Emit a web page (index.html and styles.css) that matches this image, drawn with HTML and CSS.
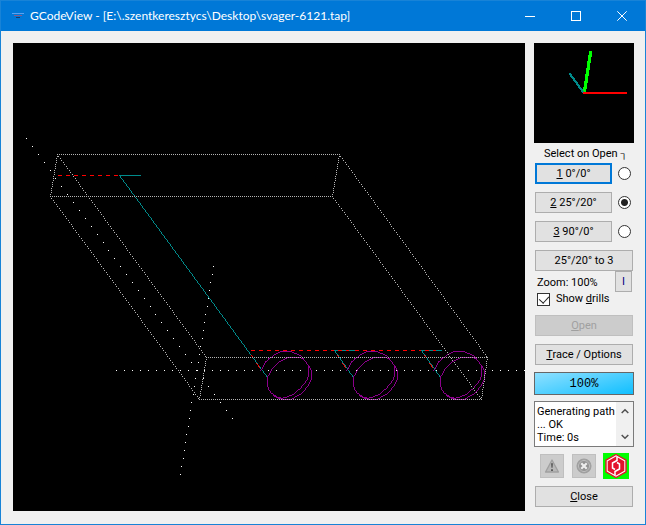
FILE: index.html
```html
<!DOCTYPE html>
<html lang="en">
<head>
<meta charset="utf-8">
<title>GCodeView</title>
<link rel="stylesheet" href="styles.css">
</head>
<body>
<div class="window">
  <header class="titlebar">
    <svg class="app-icon" viewBox="0 0 12 6" aria-hidden="true"><path d="M0 .5h12" stroke="#5aa2f2"/><path d="M2 2.5h8" stroke="#8a5a86"/><path d="M4 4.5h4" stroke="#1e3a66"/></svg>
    <h1 class="title">GCodeView - [E:\.szentkeresztycs\Desktop\svager-6121.tap]</h1>
    <div class="caption-buttons">
      <button class="caption" aria-label="Minimize"><svg viewBox="0 0 10 10"><path d="M0 5.5h10"/></svg></button>
      <button class="caption" aria-label="Maximize"><svg viewBox="0 0 10 10"><path d="M.5 .5h9v9h-9z"/></svg></button>
      <button class="caption" aria-label="Close window"><svg class="smooth" viewBox="0 0 10 10"><path d="M.3 .3l9.4 9.4M9.700 .3l-9.400 9.400"/></svg></button>
    </div>
  </header>
  <main class="content">
    <div class="viewport"><canvas id="view" width="512" height="468"></canvas></div>
    <aside class="sidebar">
      <canvas class="gizmo" id="gizmo" width="100" height="100"></canvas>
      <p class="caption-text">Select on Open <span class="corner">┐</span></p>
      <div class="presets">
        <div class="preset"><button class="btn focused"><u>1</u> 0°/0°</button><input type="radio" name="view" aria-label="Select view 1 on open"></div>
        <div class="preset"><button class="btn"><u>2</u> 25°/20°</button><input type="radio" name="view" aria-label="Select view 2 on open" checked></div>
        <div class="preset"><button class="btn"><u>3</u> 90°/0°</button><input type="radio" name="view" aria-label="Select view 3 on open"></div>
        <button class="btn">25°/20° to 3</button>
      </div>
      <div class="zoom-row">
        <div class="zoom-info">
          <span>Zoom: 100%</span>
          <label class="check"><input type="checkbox" checked><span>Show <u>d</u>rills</span></label>
        </div>
        <button class="btn info">I</button>
      </div>
      <div class="actions">
        <button class="btn" disabled><u>O</u>pen</button>
        <button class="btn"><u>T</u>race / Options</button>
      </div>
      <div class="progress" role="progressbar" aria-valuenow="100">100%</div>
      <div class="log">
        <textarea readonly aria-label="Log">Generating path
... OK
Time: 0s</textarea>
        <div class="scroll">
          <button aria-label="Scroll up"><svg viewBox="0 0 8 6"><path d="M.7 5L4 1.700 7.300 5"/></svg></button>
          <button aria-label="Scroll down"><svg viewBox="0 0 8 6"><path d="M.7 1L4 4.300 7.300 1"/></svg></button>
        </div>
      </div>
      <div class="tools">
        <button class="tool" aria-label="Warnings" disabled><svg viewBox="0 0 24 24"><path d="M12 5.500L19 18.500H5z" fill="#b8b8b8" stroke="#a0a0a0" stroke-width="1.500" stroke-linejoin="round"/><path d="M11 9h2l-.4 5h-1.200zM11 15.500h2v2h-2z" fill="#555"/></svg></button>
        <button class="tool" aria-label="Stop" disabled><svg viewBox="0 0 24 24"><circle cx="12" cy="12" r="7.500" fill="#939393" stroke="#a0a0a0" stroke-width="1.500"/><circle cx="12" cy="12" r="6" fill="none" stroke="#c4c4c4"/><path d="M9 9l6 6M15 9l-6 6" stroke="#eee" stroke-width="2.400"/></svg></button>
        <button class="tool brand" aria-label="About"><svg viewBox="0 0 26 26"><path d="M13 1.500L23 7.200V18.800L13 24.500 3 18.800V7.200z" fill="#fff" stroke="#e3122b" stroke-width="1.400"/><path d="M13 3.500L21.300 8.200V17.800L13 22.500 4.700 17.800V8.200z" fill="#e3122b"/><path d="M14 4V7.500L9.500 10V15L12 16.500M12 22V18.500L16.500 16V11L14 9.500" fill="none" stroke="#fff" stroke-width="1.500"/></svg></button>
      </div>
      <button class="btn close"><u>C</u>lose</button>
    </aside>
  </main>
</div>
<script src="view.js"></script>
</body>
</html>
```
FILE: styles.css
```css
* { box-sizing: border-box; }
body { margin: 0; background: #f0f0f0; color: #000; font: 11px/14px Roboto, "Liberation Sans", sans-serif; }
button, textarea { font: inherit; color: inherit; }
p, h1 { margin: 0; }
.window { min-height: 100vh; display: flex; flex-direction: column; border: 1px solid #1883d7; }
.titlebar { display: flex; align-items: center; height: 30px; background: #0078d7; color: #fff; }
.app-icon { width: 12px; height: 6px; margin: 0 6px 0 11px; }
.title { flex: 1; font: 12px/16px Lato, "Open Sans", sans-serif; white-space: nowrap; }
.caption-buttons { display: flex; }
.caption { width: 46px; height: 30px; padding: 0; border: 0; background: none; display: grid; place-items: center; }
.caption svg { width: 10px; height: 10px; fill: none; stroke: #fff; shape-rendering: crispEdges; }
.caption .smooth { shape-rendering: auto; }
.content { flex: 1; display: flex; gap: 9px; padding: 12px 11px 13px 12px; }
.viewport { flex: 1; min-width: 0; background: #000; }
canvas { display: block; max-width: 100%; }
.sidebar { width: 100px; display: flex; flex-direction: column; }
.gizmo { background: #000; }
.caption-text { padding: 4px 0 2px 10px; height: 20px; white-space: nowrap; }
.corner { font-size: 10px; }
.presets, .actions { display: flex; flex-direction: column; gap: 8px; padding: 0 1px; }
.preset { display: flex; justify-content: space-between; align-items: center; }
.preset .btn { width: 77px; }
.btn { height: 21px; padding: 0; border: 1px solid #adadad; background: #e1e1e1; text-align: center; }
.btn:disabled { background: #ccc; border-color: #bfbfbf; color: #a0a0a0; }
.btn.focused { border: 2px solid #0078d7; }
input { appearance: none; margin: 0; border: 1px solid #333; background: #fff; width: 13px; height: 13px; }
input[type="radio"] { border-radius: 50%; margin-right: 2px; }
input[type="radio"]:checked { background: radial-gradient(circle, #222 3px, #fff 4px); }
input[type="checkbox"] { position: relative; }
input[type="checkbox"]::after { content: ""; position: absolute; left: 3px; top: 0; width: 5px; height: 8px; border: solid #222; border-width: 0 1px 1px 0; transform: rotate(42deg); }
.zoom-row { display: flex; justify-content: space-between; padding: 0 2px 0 3px; height: 44px; }
.zoom-info { display: flex; flex-direction: column; gap: 2px; padding-top: 5px; white-space: nowrap; }
.check { display: flex; align-items: center; gap: 6px; }
.info { width: 17px; margin-left: -17px; color: #000080; }
.progress { margin-top: 7px; height: 23px; border: 1px solid #666; background: linear-gradient(165deg, #8fe0ff, #10bfff); font: 12px/22px "Liberation Mono", monospace; text-align: center; }
.log { display: flex; height: 46px; margin-top: 6px; border: 1px solid #7a7a7a; background: #fff; }
.log textarea { flex: 1; min-width: 0; padding: 3px 0 0 2px; border: 0; resize: none; overflow: hidden; line-height: 13px; white-space: pre; }
.scroll { width: 17px; background: #f0f0f0; display: flex; flex-direction: column; justify-content: space-between; }
.scroll button { height: 18px; padding: 0; border: 0; background: none; display: grid; place-items: center; }
.scroll svg { width: 8px; height: 6px; fill: none; stroke: #505050; stroke-width: 1.5px; }
.tools { display: flex; align-items: center; gap: 8px; margin: 6px 0 7px; padding-left: 6px; }
.tool { width: 24px; height: 24px; padding: 0; border: 1px solid #bfbfbf; background: #ccc; }
.tool svg { display: block; width: 22px; height: 22px; }
.brand { width: 26px; height: 26px; border: 0; background: #0f0; margin-left: -1px; }
.brand svg { width: 26px; height: 26px; }
.close { margin: 0 1px; }
```
FILE: view.js
```js
const LEFT = 13, TOP = 43;
const ctx = document.getElementById("view").getContext("2d");

function dot(c, x, y, color, size = 1) {
  c.fillStyle = color;
  c.fillRect(x, y, size, size);
}

// Steps along the major axis; draws `on` pixels out of every `period`.
function line(x0, y0, x1, y1, color, on = 1, period = 1) {
  const n = Math.max(Math.abs(x1 - x0), Math.abs(y1 - y0));
  for (let i = 0; i <= n; i++) {
    if (i % period >= on) continue;
    const t = n ? i / n : 0;
    dot(ctx, Math.round(x0 + (x1 - x0) * t) - LEFT, Math.round(y0 + (y1 - y0) * t) - TOP, color);
  }
}

const TEAL = "#008b8b", RED = "#ff0000", PURPLE = "#8b008b", GREY = "#b4b4b4";

// Helical drill path, as points on the first hole.
const hole = [
  [260, 370], [264, 363], [270, 357], [278, 352], [287, 351], [298, 354], [305, 361], [310, 369], [311, 376],
  [308, 384], [302, 392], [292, 398], [284, 399], [275, 396], [269, 390], [267, 385], [267, 378],
  [270, 371], [277, 363], [285, 358], [292, 357], [300, 357], [305, 361], [308, 368], [308, 375],
  [304, 383], [295, 392], [285, 397], [278, 397], [272, 393]
];
function spline(points, dx) {
  let prev = null;
  for (let i = 0; i < points.length - 1; i++) {
    const a = points[Math.max(i - 1, 0)], b = points[i], c = points[i + 1], d = points[Math.min(i + 2, points.length - 1)];
    for (let s = 0; s <= 4; s++) {
      const t = s / 4;
      const p = [0, 1].map(k => Math.round(0.5 * (2 * b[k] + (c[k] - a[k]) * t +
        (2 * a[k] - 5 * b[k] + 4 * c[k] - d[k]) * t * t + (3 * b[k] - a[k] - 3 * c[k] + d[k]) * t * t * t)));
      if (prev) line(prev[0] + dx, prev[1], p[0] + dx, p[1], PURPLE);
      prev = p;
    }
  }
}

// Axes
line(116, 370, 524, 370, "#fff", 1, 8);
line(26, 138, 232, 418, "#fff", 1, 8);
line(213, 266, 180, 474, "#fff", 1, 8);

// Rapid moves and plunges
line(58, 175, 119, 175, RED, 4, 8);
line(119, 175, 140, 175, TEAL);
line(119, 175, 267, 377, TEAL);
line(251, 350, 422, 350, RED, 4, 8);
[334, 421].forEach(x => {
  line(x, 350, x + 20, 350, TEAL);
  line(x + 4, 350, x + 14, 350, RED, 4, 8);
});
[0, 86, 173].forEach(dx => {
  if (dx) line(248 + dx, 350, 267 + dx, 377, TEAL);
  line(251 + dx, 355, 252 + dx, 356, RED);
  line(256 + dx, 363, 259 + dx, 367, RED);
  spline(hole, dx);
});

// Bounding box
[[57, 154, 339, 154], [50, 196, 332, 196], [206, 357, 487, 357], [199, 399, 481, 399],
 [57, 154, 50, 196], [339, 154, 332, 196], [206, 357, 199, 399], [487, 357, 481, 399],
 [57, 154, 206, 357], [50, 196, 199, 399], [339, 154, 487, 357], [332, 196, 481, 399]
].forEach(e => line(...e, GREY, 1, 2));

// Orientation gizmo
const g = document.getElementById("gizmo").getContext("2d");
function bar(x0, y0, x1, y1, color, size) {
  const n = Math.max(Math.abs(x1 - x0), Math.abs(y1 - y0));
  for (let i = 0; i <= n; i++)
    dot(g, Math.round(x0 + (x1 - x0) * i / n), Math.round(y0 + (y1 - y0) * i / n), color, size);
}
bar(49, 47, 55, 8, "#00ff00", 3);
bar(35, 30, 48, 48, TEAL, 2);
bar(49, 49, 91, 49, RED, 2);
```
